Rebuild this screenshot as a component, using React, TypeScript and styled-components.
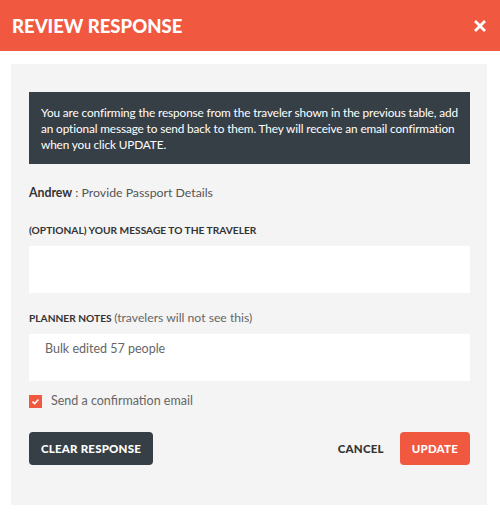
import React from "react";
import styled, { createGlobalStyle } from "styled-components";

const GlobalStyle = createGlobalStyle`
  body {
    margin: 0;
    background: #ffffff;
    font-family: "Lato", "Open Sans", sans-serif;
  }
`;

const Header = styled.header`
  height: 51px;
  background: #f15840;
  display: flex;
  align-items: center;
  justify-content: space-between;
  padding: 0 14px 0 12px;
`;

const Title = styled.h1`
  margin: 0;
  color: #fff;
  font-size: 18.5px;
  font-weight: 900;
  letter-spacing: 0;
`;

const Close = styled.button`
  border: 0;
  background: none;
  padding: 0;
  width: 12px;
  height: 12px;
  display: flex;
  cursor: pointer;
`;

const Panel = styled.div`
  margin: 13px 13px 12px 11px;
  background: #f4f4f4;
  padding: 28px 17px 40px 18px;
  height: 441px;
  box-sizing: border-box;
`;

const Notice = styled.div`
  background: #363f46;
  color: #fff;
  font-size: 11.8px;
  letter-spacing: -0.12px;
  line-height: 16px;
  padding: 13px 8px 11px 12px;
  height: 72px;
  box-sizing: border-box;
`;

const Who = styled.div`
  margin-top: 21px;
  font-size: 12.3px;
  color: #555;
  line-height: 16px;
  b {
    color: #333;
    font-weight: 700;
  }
`;

const Label = styled.div<{ $top: number }>`
  margin-top: ${(p) => p.$top}px;
  font-size: 10.2px;
  font-weight: 700;
  color: #333;
  line-height: 14px;
  text-transform: uppercase;
  span {
    text-transform: none;
    font-weight: 400;
    color: #666;
    font-size: 12.2px;
  }
`;

const Field = styled.div`
  margin-top: 9px;
  height: 47px;
  background: #fff;
  box-sizing: border-box;
  padding: 7px 16px;
  font-size: 12.5px;
  line-height: 16px;
  color: #666;
`;

const Check = styled.label`
  margin-top: 12px;
  display: flex;
  align-items: center;
  gap: 9px;
  font-size: 12.5px;
  color: #666;
  line-height: 16px;
`;

const Box = styled.span`
  width: 13px;
  height: 13px;
  background: #f15840;
  display: flex;
  align-items: center;
  justify-content: center;
`;

const Actions = styled.div`
  margin-top: 23px;
  display: flex;
  align-items: center;
`;

const Btn = styled.button<{ $tone: "dark" | "red" | "plain" }>`
  height: 33px;
  border: 0;
  border-radius: 4px;
  font-family: inherit;
  font-size: 11.5px;
  font-weight: 900;
  letter-spacing: 0.2px;
  padding: 0 12px;
  cursor: pointer;
  color: ${(p) => (p.$tone === "plain" ? "#333" : "#fff")};
  background: ${(p) =>
    p.$tone === "dark" ? "#363f46" : p.$tone === "red" ? "#f15840" : "transparent"};
`;

const Spacer = styled.div`
  flex: 1;
`;

export default function App() {
  return (
    <>
      <GlobalStyle />
      <Header>
        <Title>REVIEW RESPONSE</Title>
        <Close aria-label="close">
          <svg width="12" height="12" viewBox="0 0 12 12">
            <path d="M2 2 L10 10 M10 2 L2 10" stroke="#fff" strokeWidth="2.8" strokeLinecap="square" />
          </svg>
        </Close>
      </Header>
      <Panel>
        <Notice>
          You are confirming the response from the traveler shown in the previous table, add an
          optional message to send back to them. They will receive an email confirmation when you
          click UPDATE.
        </Notice>
        <Who>
          <b>Andrew</b> : Provide Passport Details
        </Who>
        <Label $top={22}>(Optional) Your message to the traveler</Label>
        <Field />
        <Label $top={18}>
          Planner Notes <span>(travelers will not see this)</span>
        </Label>
        <Field>Bulk edited 57 people</Field>
        <Check>
          <Box>
            <svg width="9" height="9" viewBox="0 0 9 9">
              <path d="M1.5 4.6 L3.6 6.6 L7.5 2.4" stroke="#fff" strokeWidth="1.5" fill="none" />
            </svg>
          </Box>
          Send a confirmation email
        </Check>
        <Actions>
          <Btn $tone="dark">CLEAR RESPONSE</Btn>
          <Spacer />
          <Btn $tone="plain">CANCEL</Btn>
          <Btn $tone="red" style={{ marginLeft: 4 }}>UPDATE</Btn>
        </Actions>
      </Panel>
    </>
  );
}
